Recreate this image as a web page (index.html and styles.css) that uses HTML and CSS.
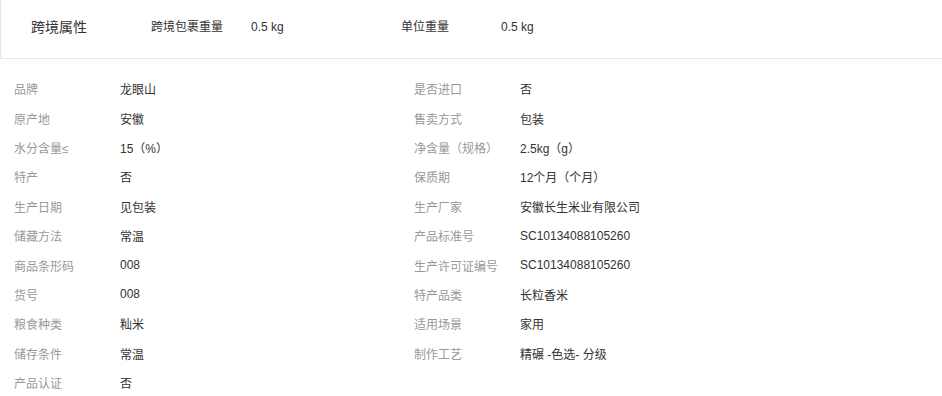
FILE: index.html
```html
<!DOCTYPE html>
<html lang="zh-CN">
<head>
<meta charset="utf-8">
<link rel="stylesheet" href="styles.css">
</head>
<body>
<div class="cross">
  <div class="cross-title">跨境属性</div>
  <div class="cross-item"><span class="cross-label">跨境包裹重量</span><span class="cross-value">0.5 kg</span></div>
  <div class="cross-item"><span class="cross-label">单位重量</span><span class="cross-value">0.5 kg</span></div>
</div>
<div class="attrs">
  <div class="attr"><span class="attr-label">品牌</span><span class="attr-value">龙眼山</span></div>
  <div class="attr"><span class="attr-label">是否进口</span><span class="attr-value">否</span></div>
  <div class="attr"><span class="attr-label">原产地</span><span class="attr-value">安徽</span></div>
  <div class="attr"><span class="attr-label">售卖方式</span><span class="attr-value">包装</span></div>
  <div class="attr"><span class="attr-label">水分含量≤</span><span class="attr-value">15（%）</span></div>
  <div class="attr"><span class="attr-label">净含量（规格）</span><span class="attr-value">2.5kg（g）</span></div>
  <div class="attr"><span class="attr-label">特产</span><span class="attr-value">否</span></div>
  <div class="attr"><span class="attr-label">保质期</span><span class="attr-value">12个月（个月）</span></div>
  <div class="attr"><span class="attr-label">生产日期</span><span class="attr-value">见包装</span></div>
  <div class="attr"><span class="attr-label">生产厂家</span><span class="attr-value">安徽长生米业有限公司</span></div>
  <div class="attr"><span class="attr-label">储藏方法</span><span class="attr-value">常温</span></div>
  <div class="attr"><span class="attr-label">产品标准号</span><span class="attr-value">SC10134088105260</span></div>
  <div class="attr"><span class="attr-label">商品条形码</span><span class="attr-value">008</span></div>
  <div class="attr"><span class="attr-label">生产许可证编号</span><span class="attr-value">SC10134088105260</span></div>
  <div class="attr"><span class="attr-label">货号</span><span class="attr-value">008</span></div>
  <div class="attr"><span class="attr-label">特产品类</span><span class="attr-value">长粒香米</span></div>
  <div class="attr"><span class="attr-label">粮食种类</span><span class="attr-value">籼米</span></div>
  <div class="attr"><span class="attr-label">适用场景</span><span class="attr-value">家用</span></div>
  <div class="attr"><span class="attr-label">储存条件</span><span class="attr-value">常温</span></div>
  <div class="attr"><span class="attr-label">制作工艺</span><span class="attr-value">精碾 -色选- 分级</span></div>
  <div class="attr"><span class="attr-label">产品认证</span><span class="attr-value">否</span></div>
</div>
</body>
</html>
```
FILE: styles.css
```css
html, body {
  margin: 0;
  padding: 0;
  background: #fff;
}
body {
  width: 942px;
  font-family: "Liberation Sans", "Noto Sans CJK SC", sans-serif;
  font-size: 12px;
  color: #333;
}
.cross {
  box-sizing: border-box;
  height: 59px;
  padding-bottom: 4px;
  border-left: 1px solid #e8e8e8;
  border-bottom: 1px solid #e8e8e8;
  display: flex;
  align-items: center;
}
.cross-title {
  width: 120px;
  padding-left: 30px;
  font-size: 14px;
  line-height: 20px;
  color: #333;
}
.cross-item {
  display: flex;
  width: 250px;
  line-height: 20px;
}
.cross-label {
  width: 100px;
}
.attrs {
  display: grid;
  grid-template-columns: 400px 400px;
  grid-auto-rows: 29.4px;
  padding-top: 15px;
}
.attr {
  display: flex;
  align-items: center;
  padding-left: 14px;
}
.attr-label {
  width: 106px;
  color: #999;
}
.attr-value {
  color: #333;
}
```
